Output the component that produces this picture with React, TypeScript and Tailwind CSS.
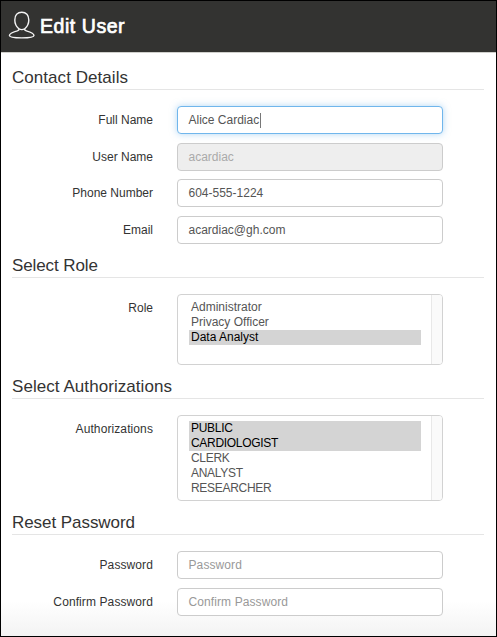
import type { ReactNode } from "react";

function UserIcon() {
  return (
    <svg className="h-[30px] w-[28px] shrink-0" viewBox="0 0 28 30" fill="none" stroke="#f4f4f4" strokeWidth="1.4" strokeLinejoin="round">
      <path d="M13.8 1.2C9.5 1.2 6.800 4.200 6.800 8.900c0 4.500 2 7 4 8.800.5 1.200-.2 1.700-1.500 2.100C5 21 1.400 22.300 1.400 24.500c0 1.700 4.300 2.400 12.300 2.400S26 26.200 26 24.500c0-2.200-3.600-3.500-7.700-4.700-1.300-.4-2-.9-1.500-2.100 2-1.800 4-4.300 4-8.800 0-4.700-2.700-7.700-7-7.700Z" />
      <path d="M11 17.900c1.800.9 3.800.9 5.600 0" />
    </svg>
  );
}

function Section({ title, className, children }: { title: string; className: string; children: ReactNode }) {
  return (
    <section>
      <h2 className={`flex items-end border-b border-[#e5e5e5] pb-px text-[17px] leading-[20px] text-[#333] ${className}`}>{title}</h2>
      <div className="flex flex-col gap-[8.667px] pt-4">{children}</div>
    </section>
  );
}

function Row({ label, className = "", children }: { label: string; className?: string; children: ReactNode }) {
  return (
    <div className="flex items-start">
      <span className={`w-[141px] shrink-0 whitespace-nowrap pt-[6px] text-right leading-4 text-[#333] ${className}`}>{label}</span>
      <div className="ml-6 w-[266px]">{children}</div>
    </div>
  );
}

function Field({ value, placeholder, disabled, focused }: { value?: string; placeholder?: string; disabled?: boolean; focused?: boolean }) {
  const tone = focused
    ? "border-[#70b6ec] bg-white text-[#555] shadow-[0_0_7px_rgba(102,175,233,0.5)]"
    : disabled
      ? "border-[#ccc] bg-[#eee] text-[#aaa]"
      : "border-[#ccc] bg-white text-[#555]";
  return (
    <div className={`flex h-[28px] items-center rounded-[4px] border pl-[10.500px] leading-4 ${tone}`}>
      <span className={value ? "" : "tracking-[0.1px] text-[#999]"}>{value ?? placeholder}</span>
      {focused && <span className="ml-[0.500px] h-[15px] w-px bg-[#777]" />}
    </div>
  );
}

function ListBox({ options, selected, className }: { options: string[]; selected: string[]; className: string }) {
  return (
    <div className={`flex overflow-hidden rounded-[4px] border border-[#d2d2d2] bg-white ${className}`}>
      <ul className="flex-1 pl-[11px] pr-[10px] pt-[5px]">
        {options.map((o) => (
          <li key={o} className={`h-[15px] pl-[2px] leading-[15px] ${selected.includes(o) ? "bg-[#d4d4d4] text-black" : "text-[#555]"}`}>
            {o}
          </li>
        ))}
      </ul>
      <div className="w-[11px] border-l border-[#e8e8e8] bg-[#fafafa]" />
    </div>
  );
}

export default function App() {
  return (
    <div className="h-[637px] w-[497px] overflow-hidden border border-black bg-white bg-[linear-gradient(to_bottom,#fff_600px,#f3f3f3_635px)] font-['Liberation_Sans',Arial,sans-serif] text-[12px]">
      <header className="flex h-[52px] items-center border-b border-[#d0d0cc] bg-[#333331] pb-[2px] pl-[7px]">
        <UserIcon />
        <h1 className="ml-[4px] text-[19.500px] leading-6 tracking-[0.55px] text-white [-webkit-text-stroke:0.7px_white]">Edit User</h1>
      </header>
      <main className="pl-[11px] pr-[12px]">
        <Section title="Contact Details" className="h-[37px] tracking-[0.05px]">
          <Row label="Full Name"><Field value="Alice Cardiac" focused /></Row>
          <Row label="User Name"><Field value="acardiac" disabled /></Row>
          <Row label="Phone Number"><Field value="604-555-1224" /></Row>
          <Row label="Email"><Field value="acardiac@gh.com" /></Row>
        </Section>
        <Section title="Select Role" className="mt-[2px] h-[32px] tracking-[-0.1px]">
          <Row label="Role">
            <ListBox className="h-[71px]" options={["Administrator", "Privacy Officer", "Data Analyst"]} selected={["Data Analyst"]} />
          </Row>
        </Section>
        <Section title="Select Authorizations" className="h-[34px] tracking-[0.06px]">
          <Row label="Authorizations" className="tracking-[0.1px]">
            <ListBox className="h-[86px] tracking-[-0.3px]" options={["PUBLIC", "CARDIOLOGIST", "CLERK", "ANALYST", "RESEARCHER"]} selected={["PUBLIC", "CARDIOLOGIST"]} />
          </Row>
        </Section>
        <Section title="Reset Password" className="h-[34px] tracking-[-0.06px]">
          <Row label="Password" className="tracking-[0.1px]"><Field placeholder="Password" /></Row>
          <Row label="Confirm Password" className="tracking-[0.1px]"><Field placeholder="Confirm Password" /></Row>
        </Section>
      </main>
    </div>
  );
}
